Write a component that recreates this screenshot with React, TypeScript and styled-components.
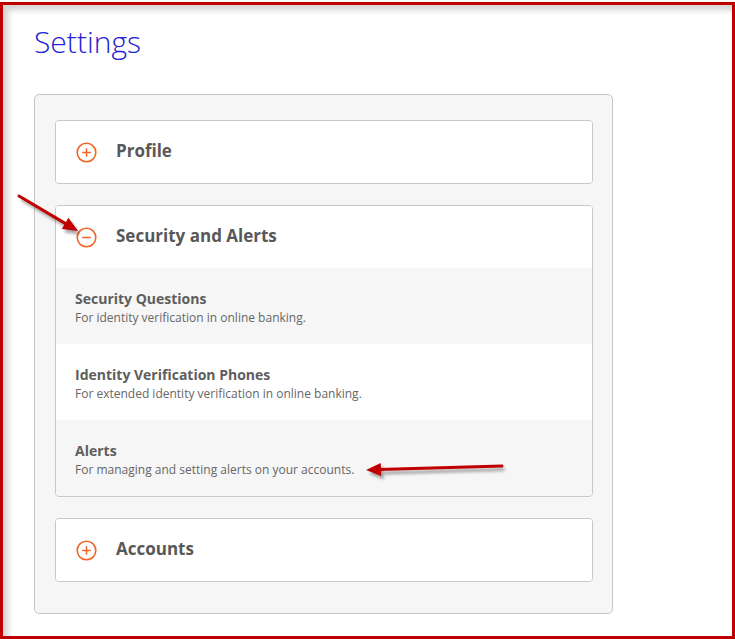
import styled, { createGlobalStyle } from 'styled-components';

const GlobalStyle = createGlobalStyle`
  html, body {
    margin: 0;
    padding: 0;
    background: #ffffff;
  }
  body {
    font-family: 'Open Sans', 'Liberation Sans', sans-serif;
  }
`;

/* styled components */
const Frame = styled.div`
  position: relative;
  box-sizing: border-box;
  width: 735px;
  height: 637px;
  margin-top: 2px;
  border: 3px solid #c00000;
  box-shadow: inset 5px 5px 6px rgba(0, 0, 0, 0.18);
  padding: 22px 0 0 31px;
`;

const Title = styled.h1`
  margin: 0;
  font-size: 30px;
  line-height: 29px;
  font-weight: 300;
  color: #2323d2;
`;

const Panel = styled.div`
  box-sizing: border-box;
  width: 579px;
  margin-top: 38px;
  padding: 25px 19px 31px 20px;
  background: #f6f6f6;
  border: 1px solid #c6c6c6;
  border-radius: 5px;
  display: flex;
  flex-direction: column;
  gap: 21px;
`;

const Card = styled.div`
  background: #ffffff;
  border: 1px solid #c8c8c8;
  border-radius: 4px;
  overflow: hidden;
`;

const CardHeader = styled.div`
  height: 62px;
  display: flex;
  align-items: center;
  gap: 19px;
  padding-left: 20px;
  background: #ffffff;
`;

const CardTitle = styled.span`
  font-size: 17px;
  line-height: 20px;
  font-weight: 700;
  color: #585858;
  margin-top: -2px;
`;

const Row = styled.div<{ shaded: boolean }>`
  height: 76px;
  box-sizing: border-box;
  display: flex;
  flex-direction: column;
  padding: 22px 0 0 19px;
  background: ${(p) => (p.shaded ? '#f6f6f6' : '#ffffff')};
`;

const RowTitle = styled.div`
  font-size: 14px;
  line-height: 18px;
  font-weight: 700;
  color: #5e5e5e;
`;

const RowText = styled.div`
  margin-top: 2px;
  font-size: 12px;
  line-height: 16px;
  color: #666666;
`;

const Annotations = styled.svg`
  position: absolute;
  left: -3px;
  top: -5px;
  width: 735px;
  height: 639px;
  pointer-events: none;
`;

function ToggleIcon({ open }: { open: boolean }) {
  return (
    <svg width="21" height="21" viewBox="0 0 21 21">
      <circle cx="10.5" cy="10.5" r="9.3" fill="none" stroke="#f26424" strokeWidth="1.6" />
      <line x1="6.2" y1="10.5" x2="14.8" y2="10.5" stroke="#f26424" strokeWidth="1.5" />
      {!open && <line x1="10.5" y1="6.2" x2="10.5" y2="14.8" stroke="#f26424" strokeWidth="1.5" />}
    </svg>
  );
}

const securityItems = [
  { title: 'Security Questions', text: 'For identity verification in online banking.' },
  { title: 'Identity Verification Phones', text: 'For extended identity verification in online banking.' },
  { title: 'Alerts', text: 'For managing and setting alerts on your accounts.' },
];

function Arrow({ x1, y1, x2, y2 }: { x1: number; y1: number; x2: number; y2: number }) {
  const dx = x2 - x1;
  const dy = y2 - y1;
  const len = Math.hypot(dx, dy);
  const ux = dx / len;
  const uy = dy / len;
  const head = 15;
  const half = 6.5;
  const bx = x2 - ux * head;
  const by = y2 - uy * head;
  const pts = `${x2},${y2} ${bx - uy * half},${by + ux * half} ${bx + uy * half},${by - ux * half}`;
  return (
    <g>
      <g transform="translate(2.5,3.5)" opacity="0.35" filter="url(#blur)">
        <line x1={x1} y1={y1} x2={bx} y2={by} stroke="#000" strokeWidth="3" />
        <polygon points={pts} fill="#000" />
      </g>
      <line x1={x1} y1={y1} x2={bx + ux * 2} y2={by + uy * 2} stroke="#c00000" strokeWidth="3" strokeLinecap="round" />
      <polygon points={pts} fill="#c00000" />
    </g>
  );
}

export default function App() {
  return (
    <>
      <GlobalStyle />
      <Frame>
        <Title>Settings</Title>
        <Panel>
          <Card>
            <CardHeader>
              <ToggleIcon open={false} />
              <CardTitle>Profile</CardTitle>
            </CardHeader>
          </Card>
          <Card>
            <CardHeader>
              <ToggleIcon open={true} />
              <CardTitle>Security and Alerts</CardTitle>
            </CardHeader>
            {securityItems.map((item, i) => (
              <Row key={item.title} shaded={i % 2 === 0}>
                <RowTitle>{item.title}</RowTitle>
                <RowText>{item.text}</RowText>
              </Row>
            ))}
          </Card>
          <Card>
            <CardHeader>
              <ToggleIcon open={false} />
              <CardTitle>Accounts</CardTitle>
            </CardHeader>
          </Card>
        </Panel>
        <Annotations viewBox="0 0 735 639">
          <defs>
            <filter id="blur" x="-20%" y="-20%" width="140%" height="140%">
              <feGaussianBlur stdDeviation="1.5" />
            </filter>
          </defs>
          <Arrow x1={19} y1={196} x2={78} y2={231} />
          <Arrow x1={502} y1={466} x2={366} y2={470} />
        </Annotations>
      </Frame>
    </>
  );
}
